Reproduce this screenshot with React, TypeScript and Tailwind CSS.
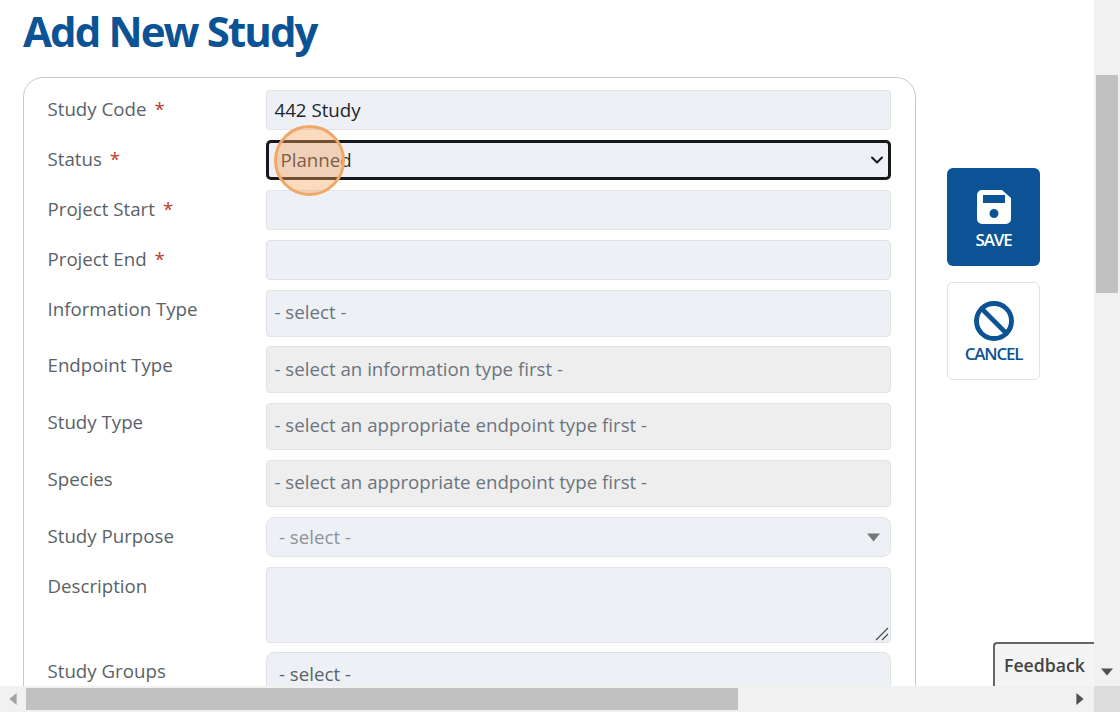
import { Ban, ChevronDown } from "lucide-react";

const fieldBox = "rounded-[4px] border border-[#dfe3e8] bg-[#edf1f6] text-[18.7px] leading-none";

function Label({ text, required }: { text: string; required?: boolean }) {
  return (
    <div className="-ml-[0.5px] w-[218.5px] shrink-0 pt-[7px] text-[18.7px] leading-[24px] text-[#5a6268]">
      {text}
      {required && <span className="ml-[8px] text-[#c0392b]">*</span>}
    </div>
  );
}

function TextRow({ label, required, value }: { label: string; required?: boolean; value?: string }) {
  return (
    <div className="flex">
      <Label text={label} required={required} />
      <div className={`${fieldBox} flex h-[40px] flex-1 items-center px-[7.5px] text-[#212529]`}>{value}</div>
    </div>
  );
}

function PickerRow({ label, hint, disabled }: { label: string; hint: string; disabled?: boolean }) {
  return (
    <div className="flex">
      <Label text={label} />
      <div
        className={`${fieldBox} flex h-[47px] flex-1 items-center px-[7.5px] pb-[2px] text-[#6c757d] ${disabled ? "bg-[#eeeeee]" : ""}`}
      >
        {hint}
      </div>
    </div>
  );
}

function Arrow({ className }: { className: string }) {
  return (
    <svg viewBox="0 0 10 10" className={className} fill="currentColor">
      <path d="M0 2h10L5 8z" />
    </svg>
  );
}

export default function App() {
  return (
    <div className="relative flex h-[712px] w-[1120px] flex-col overflow-hidden bg-white font-['Open_Sans',sans-serif]">
      <div className="flex h-[686px]">
        <div className="w-[1094px] overflow-hidden pl-[23px]">
          <h1 className="h-[77px] pt-[6px] text-[42px] leading-[50px] font-bold tracking-[-1.9px] text-[#0b5394]">
            Add New Study
          </h1>
          <div className="flex">
            <div className="flex h-[640px] w-[892.5px] shrink-0 flex-col gap-[9.9px] rounded-t-[20px] border border-[#c4cbd0] pt-[12px] pr-[23.5px] pl-[24px]">
              <TextRow label="Study Code" required value="442 Study" />
              <div className="flex">
                <Label text="Status" required />
                <div className="flex h-[40px] flex-1 items-center justify-between rounded-[5px] border-[3px] border-[#16191c] bg-[#edf1f6] pr-[1px] pl-[11.5px] text-[18.7px] text-[#2b3035]">
                  Planned
                  <ChevronDown className="h-[20px] w-[20px] text-[#16191c]" strokeWidth={2.4} />
                </div>
              </div>
              <TextRow label="Project Start" required />
              <TextRow label="Project End" required />
              <PickerRow label="Information Type" hint="- select -" />
              <PickerRow label="Endpoint Type" hint="- select an information type first -" disabled />
              <PickerRow label="Study Type" hint="- select an appropriate endpoint type first -" disabled />
              <PickerRow label="Species" hint="- select an appropriate endpoint type first -" disabled />
              <div className="flex">
                <Label text="Study Purpose" />
                <div className={`${fieldBox} flex h-[40px] flex-1 items-center justify-between rounded-[8px] pr-[10px] pl-[12px] text-[#8c9399]`}>
                  - select -
                  <Arrow className="h-[13px] w-[13px] text-[#777777]" />
                </div>
              </div>
              <div className="flex">
                <Label text="Description" />
                <div className={`${fieldBox} relative h-[75.5px] flex-1`}>
                  <svg viewBox="0 0 14 14" className="absolute right-[1px] bottom-[1px] h-[14px] w-[14px] text-[#444444]" stroke="currentColor" fill="none" strokeWidth="1.1">
                    <path d="M1 13L13 1M7 13l6-6" />
                  </svg>
                </div>
              </div>
              <div className="flex">
                <Label text="Study Groups" />
                <div className={`${fieldBox} flex h-[47px] flex-1 items-start rounded-[8px] pt-[12px] pl-[12px] text-[#5a6268]`}>- select -</div>
              </div>
            </div>
            <div className="ml-[31.5px] flex flex-col gap-[16px] pt-[91px]">
              <div className="flex h-[98px] w-[93px] flex-col items-center justify-center rounded-[6px] bg-[#0b5394] pt-[6px] text-white">
                <svg viewBox="0 0 34 34" className="h-[34px] w-[34px]" fill="currentColor">
                  <path fillRule="evenodd" d="M5 0h20l9 8v21a5 5 0 0 1-5 5H5a5 5 0 0 1-5-5V5a5 5 0 0 1 5-5zM6 5v8h22V5zm11 14a4.5 4.5 0 1 0 0 9 4.5 4.5 0 0 0 0-9z" />
                </svg>
                <span className="mt-[5px] text-[17px] leading-[22px] font-semibold tracking-[-1.2px]">SAVE</span>
              </div>
              <div className="flex h-[98px] w-[93px] flex-col items-center justify-center rounded-[6px] border border-[#dfe3e8] pt-[2px] text-[#0b5394]">
                <Ban className="h-[42px] w-[42px]" strokeWidth={2.8} />
                <span className="mt-[1px] text-[17px] leading-[22px] font-semibold tracking-[-1.2px]">CANCEL</span>
              </div>
            </div>
          </div>
        </div>
        <div className="flex w-[26px] flex-col items-center bg-[#f1f1f1]">
          <div className="h-[15px]" />
          <div className="mt-[60px] h-[218px] w-[22px] bg-[#c1c1c1]" />
          <Arrow className="mt-auto mb-[8px] h-[12px] w-[12px] text-[#505050]" />
        </div>
      </div>
      <div className="flex h-[26px] bg-[#f1f1f1]">
        <div className="flex w-[1094px] items-center">
          <svg viewBox="0 0 10 10" className="ml-[7px] h-[12px] w-[12px] text-[#a3a3a3]" fill="currentColor">
            <path d="M8 0v10L2 5z" />
          </svg>
          <div className="ml-[7px] h-[22px] w-[712px] bg-[#c1c1c1]" />
          <svg viewBox="0 0 10 10" className="ml-auto mr-[8px] h-[12px] w-[12px] text-[#505050]" fill="currentColor">
            <path d="M2 0v10l6-5z" />
          </svg>
        </div>
        <div className="w-[26px] bg-[#dcdcdc]" />
      </div>
      <div className="absolute top-[125px] left-[274px] h-[71px] w-[71px] rounded-full border-[3px] border-[#f0a868] bg-[#f5a35c]/40" />
      <div className="absolute top-[642px] left-[993px] flex h-[44px] w-[101px] items-center rounded-tl-[4px] border-t-[2px] border-l-[2px] border-[#666666] bg-[#f4f4f4] pl-[9px] text-[17.7px] font-semibold text-[#444444]">
        Feedback
      </div>
    </div>
  );
}
